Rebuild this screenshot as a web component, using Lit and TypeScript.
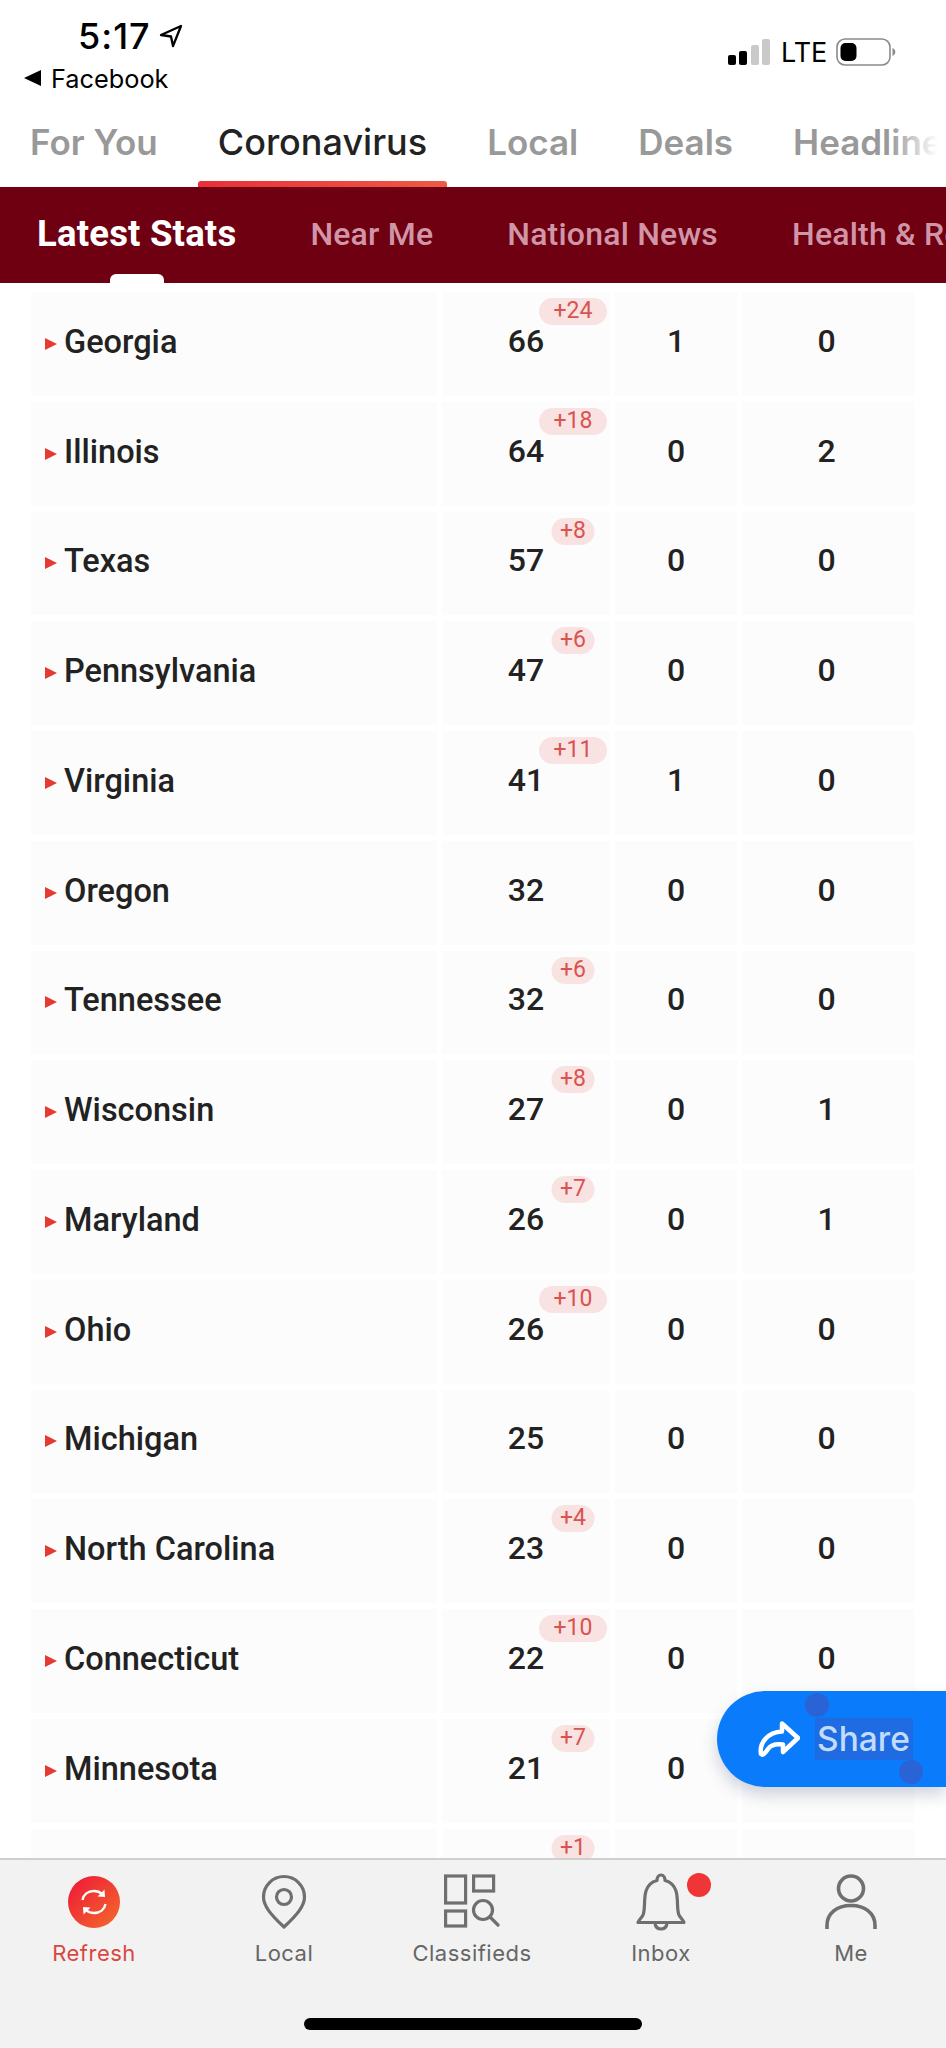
import { LitElement, css, html, nothing, svg } from "lit";
import { customElement } from "lit/decorators.js";

const rows = [
  { name: "Georgia", total: 66, badge: "+24", a: 1, b: 0 },
  { name: "Illinois", total: 64, badge: "+18", a: 0, b: 2 },
  { name: "Texas", total: 57, badge: "+8", a: 0, b: 0 },
  { name: "Pennsylvania", total: 47, badge: "+6", a: 0, b: 0 },
  { name: "Virginia", total: 41, badge: "+11", a: 1, b: 0 },
  { name: "Oregon", total: 32, badge: "", a: 0, b: 0 },
  { name: "Tennessee", total: 32, badge: "+6", a: 0, b: 0 },
  { name: "Wisconsin", total: 27, badge: "+8", a: 0, b: 1 },
  { name: "Maryland", total: 26, badge: "+7", a: 0, b: 1 },
  { name: "Ohio", total: 26, badge: "+10", a: 0, b: 0 },
  { name: "Michigan", total: 25, badge: "", a: 0, b: 0 },
  { name: "North Carolina", total: 23, badge: "+4", a: 0, b: 0 },
  { name: "Connecticut", total: 22, badge: "+10", a: 0, b: 0 },
  { name: "Minnesota", total: 21, badge: "+7", a: 0, b: "" },
  { name: "", total: "", badge: "+1", a: "", b: "" },
];

const topTabs = ["For You", "Coronavirus", "Local", "Deals", "Headlines"];
const subTabs = ["Latest Stats", "Near Me", "National News", "Health & Remedies"];

const icons = {
  refresh: svg`<svg width="52" height="52" viewBox="0 0 52 52">
    <defs><linearGradient id="rg" x1="0" y1="0" x2="1" y2="1"><stop offset="0" stop-color="#ee1537"/><stop offset="1" stop-color="#f36c2c"/></linearGradient></defs>
    <circle cx="26" cy="26" r="26" fill="url(#rg)"/>
    <path d="M14.5 24C15.5 18.5 20 15 26 15c3.4 0 6 1 8 3" fill="none" stroke="#fff" stroke-width="2.4"/>
    <path d="M37.5 28c-1 5.500-5.500 9-11.500 9-3.400 0-6-1-8-3" fill="none" stroke="#fff" stroke-width="2.400"/>
    <path d="M36.500 13.500 37 21 29.500 20.500Z M15.500 38.500 15 31 22.500 31.500Z" fill="#fff"/>
  </svg>`,
  pin: svg`<svg width="46" height="56" viewBox="0 0 46 56" fill="none" stroke="#6f6f6f" stroke-width="3.200">
    <path d="M23 53C10 41 2.500 32 2.500 23a20.500 20.500 0 0 1 41 0C43.500 32 36 41 23 53Z" stroke-linejoin="round"/>
    <circle cx="23" cy="23" r="7.500"/>
  </svg>`,
  classifieds: svg`<svg width="56" height="56" viewBox="0 0 56 56" fill="none" stroke="#6f6f6f" stroke-width="3.200">
    <rect x="1.600" y="2" width="20" height="27"/>
    <rect x="1.600" y="37" width="20" height="15"/>
    <rect x="29.600" y="2" width="20" height="15"/>
    <circle cx="39" cy="36" r="9.500"/>
    <path d="M46 43 54 51" stroke-linecap="round"/>
  </svg>`,
  bell: svg`<svg width="50" height="58" viewBox="0 0 50 58" fill="none" stroke="#6f6f6f" stroke-width="3.200" stroke-linejoin="round">
    <path d="M2 49.500h46c-1-3-3-3.500-5-7.500-2.500-5.500-.5-16-3-24C38 11.500 33 8.500 29 7.500 29 4.500 27.500 2 25 2s-4 2.500-4 5.500C17 8.500 12 11.500 10 18c-2.500 8-.5 18.500-3 24-2 4-4 4.500-5 7.500Z"/>
    <path d="M19 50.500c.5 3.500 3 5.500 6 5.500s5.500-2 6-5.500"/>
  </svg>`,
  person: svg`<svg width="52" height="56" viewBox="0 0 52 56" fill="none" stroke="#6f6f6f" stroke-width="3.600">
    <circle cx="26" cy="14.500" r="12.500"/>
    <path d="M2 55V51.500C2 39 12 31.500 26 31.500S50 39 50 51.500V55"/>
  </svg>`,
};

@customElement("app-root")
export class AppRoot extends LitElement {
  static styles = css`
    :host {
      display: block;
      width: 946px;
      height: 2048px;
      background: #fff;
      overflow: hidden;
      font-family: Roboto, "Liberation Sans", sans-serif;
    }
    .page {
      position: relative;
      display: flex;
      flex-direction: column;
      height: 2048px;
      overflow: hidden;
    }
    .status {
      display: flex;
      justify-content: space-between;
      height: 104px;
      flex: none;
    }
    .status-left {
      padding-left: 24px;
      padding-top: 15px;
    }
    .clock {
      display: flex;
      align-items: center;
      gap: 8px;
      padding-left: 54px;
      height: 42px;
      font: 500 36px Inter, sans-serif;
      letter-spacing: 1px;
      color: #000;
    }
    .back {
      display: flex;
      align-items: center;
      gap: 10px;
      height: 42px;
      font: 400 25.300px Inter, sans-serif;
      color: #000;
    }
    .back i {
      width: 0;
      height: 0;
      border-top: 8px solid transparent;
      border-bottom: 8px solid transparent;
      border-right: 17px solid #000;
    }
    .status-right {
      display: flex;
      align-items: center;
      height: 32px;
      margin-top: 36px;
      padding-right: 50px;
      gap: 10px;
    }
    .bars {
      display: flex;
      align-items: flex-end;
      gap: 3.500px;
    }
    .bars i {
      width: 8px;
      border-radius: 2px;
      background: #000;
    }
    .bars i.off {
      background: #c9c9c9;
    }
    .lte {
      font: 400 27px Inter, sans-serif;
      color: #000;
      margin-left: 1px;
      width: 45px;
    }
    .top-tabs {
      position: relative;
      display: flex;
      gap: 60px;
      flex: none;
      height: 83px;
      padding: 15px 0 0 30px;
      box-sizing: border-box;
      overflow: hidden;
      white-space: nowrap;
      font: 600 35px Inter, sans-serif;
      color: #999;
    }
    .top-tabs span {
      position: relative;
      height: 68px;
      line-height: 47px;
    }
    .top-tabs span.on {
      color: #222;
      font-size: 36px;
      font-weight: 500;
    }
    .top-tabs span.on::after {
      content: "";
      position: absolute;
      left: -20px;
      right: -20px;
      bottom: 0;
      height: 6px;
      border-radius: 3px 3px 0 0;
      background: linear-gradient(90deg, #e8303a, #ee5a45);
    }
    .top-tabs::after {
      content: "";
      position: absolute;
      right: 0;
      top: 0;
      bottom: 0;
      width: 56px;
      background: linear-gradient(90deg, rgba(255, 255, 255, 0), #fff 85%);
    }
    .sub-tabs {
      display: flex;
      gap: 74px;
      flex: none;
      height: 96px;
      padding-left: 37px;
      box-sizing: border-box;
      overflow: hidden;
      white-space: nowrap;
      background: #6f0011;
      color: #d096a8;
      font-size: 32px;
      font-weight: 500;
      line-height: 94px;
    }
    .sub-tabs span {
      position: relative;
      letter-spacing: 0.2px;
    }
    .sub-tabs span.on {
      color: #fff;
      font-weight: 700;
      font-size: 36.500px;
    }
    .sub-tabs span.on::after {
      content: "";
      position: absolute;
      left: 73px;
      bottom: 0;
      width: 54px;
      height: 9px;
      border-radius: 6px 6px 0 0;
      background: #fff;
    }
    .list {
      flex: 1;
      min-height: 0;
      overflow: hidden;
      display: flex;
      flex-direction: column;
      gap: 6px;
      padding: 9px 32px 0 31px;
    }
    .row {
      flex: none;
      display: grid;
      grid-template-columns: 406px 168px 122px 1fr;
      gap: 5px;
      height: 103.750px;
      color: #222;
      font-size: 32px;
      font-weight: 500;
    }
    .cell {
      position: relative;
      display: flex;
      align-items: center;
      justify-content: center;
      padding-bottom: 6px;
      box-sizing: border-box;
      background: #fcfcfc;
    }
    .cell:last-child {
      padding-right: 3px;
    }
    .cell.name {
      justify-content: flex-start;
      padding-left: 14px;
      padding-bottom: 4px;
      gap: 7px;
      font-size: 32.500px;
    }
    .arrow {
      width: 0;
      height: 0;
      margin-top: 4px;
      border-top: 6px solid transparent;
      border-bottom: 6px solid transparent;
      border-left: 12px solid #e53a31;
    }
    .badge {
      position: absolute;
      top: 6px;
      left: calc(50% + 47px);
      transform: translateX(-50%);
      width: 43px;
      height: 27px;
      text-align: center;
      line-height: 26px;
      white-space: nowrap;
      border-radius: 14px;
      background: #f9e2e2;
      color: #d9534f;
      font-size: 23px;
      font-weight: 400;
    }
    .badge.wide {
      width: 68px;
    }
    .bottom {
      flex: none;
      position: relative;
      height: 190px;
      box-sizing: border-box;
      border-top: 2px solid #cfcfcf;
      background: #f2f2f2;
      display: grid;
      grid-template-columns: 188px 192px 184px 194px 186px;
    }
    .item {
      position: relative;
      display: flex;
      flex-direction: column;
      align-items: center;
      color: #666;
      font: 400 22px Inter, sans-serif;
      letter-spacing: 0.5px;
    }
    .item .ico {
      height: 56px;
      margin: 14px 0 10px;
      display: flex;
      align-items: center;
    }
    .item.active {
      color: #d9483f;
    }
    .dot {
      position: absolute;
      left: 123px;
      top: 13px;
      width: 24px;
      height: 24px;
      border-radius: 50%;
      background: #ef3535;
    }
    .home {
      position: absolute;
      left: 304px;
      top: 158px;
      width: 338px;
      height: 12px;
      border-radius: 6px;
      background: #000;
    }
    .share {
      position: absolute;
      left: 717px;
      top: 1691px;
      width: 229px;
      height: 96px;
      box-sizing: border-box;
      border-radius: 48px 0 0 48px;
      background: #0a7bfb;
      box-shadow: 0 8px 16px rgba(40, 60, 100, 0.22);
      display: flex;
      align-items: center;
      padding-left: 41px;
      gap: 15px;
    }
    .share .sel {
      position: relative;
      padding: 0 3px 0 2px;
      height: 42px;
      background: #1e6be2;
      color: #c3dcfd;
      font: 500 33.500px/42px Inter, sans-serif;
    }
    .handle {
      position: absolute;
      width: 24px;
      height: 24px;
      border-radius: 50%;
      background: #2a63d6;
    }
    .handle.a {
      left: -10px;
      top: -25px;
    }
    .handle.b {
      right: -10px;
      bottom: -24px;
    }
  `;

  render() {
    return html`<div class="page">
      <div class="status">
        <div class="status-left">
          <div class="clock">
            5:17
            <svg width="24" height="24" viewBox="0 0 24 24" fill="none" stroke="#000" stroke-width="2.300" stroke-linejoin="round">
              <path d="M22 2 2 11l10 1.500L14 22Z" />
            </svg>
          </div>
          <div class="back"><i></i>Facebook</div>
        </div>
        <div class="status-right">
          <div class="bars">
            <i style="height:10px"></i>
            <i style="height:14px"></i>
            <i class="off" style="height:20px"></i>
            <i class="off" style="height:26px"></i>
          </div>
          <span class="lte">LTE</span>
          <svg width="60" height="28" viewBox="0 0 60 28">
            <rect x="1" y="1" width="53" height="26" rx="8" fill="none" stroke="#8a8a8a" stroke-width="1.600" />
            <rect x="4.500" y="5" width="16" height="18" rx="5" fill="#000" />
            <path d="M56.500 10c1.800.8 2.800 2.200 2.800 4s-1 3.200-2.800 4Z" fill="#8a8a8a" />
          </svg>
        </div>
      </div>
      <div class="top-tabs">
        ${topTabs.map((t) => html`<span class=${t === "Coronavirus" ? "on" : ""}>${t}</span>`)}
      </div>
      <div class="sub-tabs">
        ${subTabs.map((t, i) => html`<span class=${i === 0 ? "on" : ""}>${t}</span>`)}
      </div>
      <div class="list">
        ${rows.map(
          (r) => html`<div class="row">
            <div class="cell name">
              ${r.name ? html`<i class="arrow"></i>${r.name}` : nothing}
            </div>
            <div class="cell">
              ${r.total}
              ${r.badge
                ? html`<span class="badge ${r.badge.length > 2 ? "wide" : ""}">${r.badge}</span>`
                : nothing}
            </div>
            <div class="cell">${r.a}</div>
            <div class="cell">${r.b}</div>
          </div>`
        )}
      </div>
      <div class="bottom">
        <div class="item active"><div class="ico">${icons.refresh}</div>Refresh</div>
        <div class="item"><div class="ico">${icons.pin}</div>Local</div>
        <div class="item"><div class="ico">${icons.classifieds}</div>Classifieds</div>
        <div class="item"><div class="ico">${icons.bell}</div>Inbox<i class="dot"></i></div>
        <div class="item"><div class="ico">${icons.person}</div>Me</div>
        <div class="home"></div>
      </div>
      <div class="share">
        <svg width="42" height="36" viewBox="0 0 42 36" fill="none" stroke="#fff" stroke-width="4.500" stroke-linejoin="round" stroke-linecap="round">
          <path d="M24 2.500 40 17 25 31V23.500C17 22.500 12 25 10 28 8 31 5 35 3 33 1 22 10 11 24 10.500Z" />
        </svg>
        <span class="sel">Share<i class="handle a"></i><i class="handle b"></i></span>
      </div>
    </div>`;
  }
}
